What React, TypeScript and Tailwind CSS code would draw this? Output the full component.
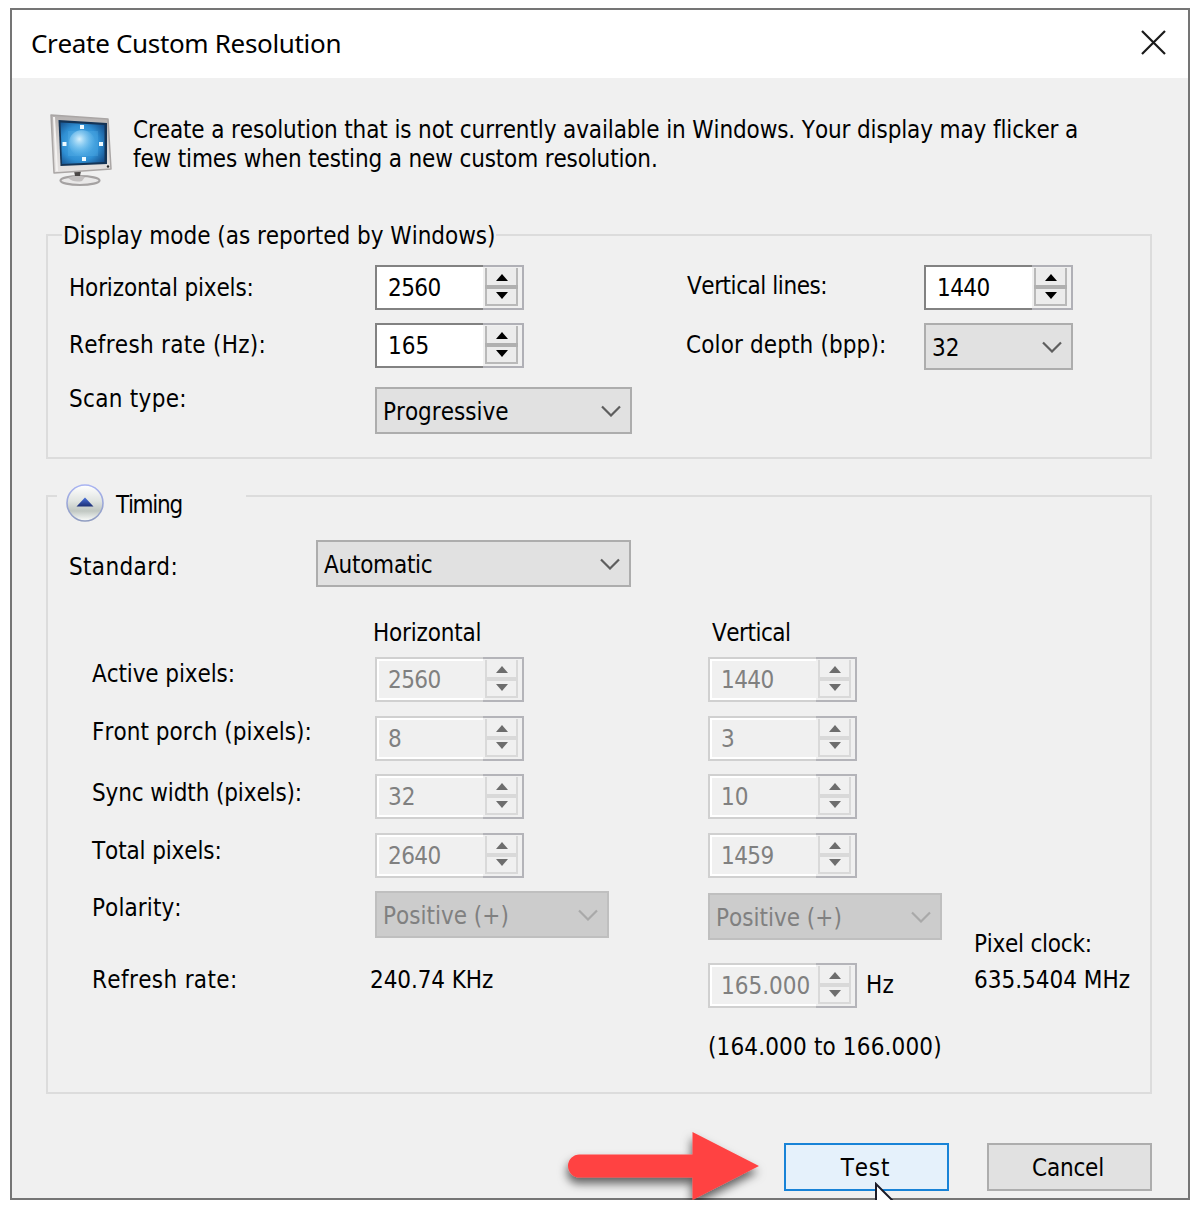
import React from 'react';
import clsx from 'clsx';

const TEXT = 'h-[30px] leading-[30px] whitespace-nowrap';

function App() {
  return (
    <div className="relative h-[1200px] w-[1204px] overflow-hidden bg-white pl-[10px] pt-[8px] font-['DejaVu_Sans_Condensed','DejaVu_Sans',sans-serif] text-[24px] text-black [font-kerning:none]">
      <div className="flex h-[1192px] w-[1180px] flex-col border-2 border-[#757575] bg-[#f0f0f0]">
        {/* Title bar */}
        <div className="flex h-[68px] shrink-0 items-center justify-between bg-white pl-[19px] pr-[22px]">
          <h1 className="-mt-[3px] whitespace-nowrap font-['Noto_Sans',sans-serif] text-[26px] leading-[34px] tracking-[-0.33px]">
            Create Custom Resolution
          </h1>
          <button aria-label="Close" className="-mt-[4px]">
            <svg width="25" height="25" viewBox="0 0 25 25" fill="none" stroke="#1a1a1a" strokeWidth="2.2">
              <path d="M1 1 24 24M24 1 1 24" />
            </svg>
          </button>
        </div>

        <div className="flex flex-1 flex-col pl-[34px] pr-[36px]">
          {/* Intro */}
          <div className="flex h-[156px] shrink-0 items-start">
            <MonitorIcon />
            <p className="ml-[17px] mt-[38px] whitespace-nowrap leading-[29px]">
              <span className="block tracking-[-0.12px]">
                Create a resolution that is not currently available in Windows. Your display may flicker a
              </span>
              <span className="block tracking-[-0.15px]">few times when testing a new custom resolution.</span>
            </p>
          </div>

          {/* Display mode */}
          <section className="h-[225px] shrink-0 border-2 border-[#dcdcdc]">
            <h2 className={clsx(TEXT, '-mt-[15px] ml-[14px] w-fit bg-[#f0f0f0] px-px tracking-[-0.02px]')}>
              Display mode (as reported by Windows)
            </h2>
            <div className="ml-[20px] mt-[14px] flex h-[58px] items-start">
              <span className={clsx(TEXT, 'mt-[8px] w-[307px] pl-px tracking-[-0.15px]')}>Horizontal pixels:</span>
              <Spinner value="2560" />
              <span className={clsx(TEXT, 'ml-[163px] mt-[6px] w-[237px] tracking-[-0.45px]')}>Vertical lines:</span>
              <Spinner value="1440" />
            </div>
            <div className="ml-[20px] flex h-[64px] items-start">
              <span className={clsx(TEXT, 'mt-[7px] w-[307px] pl-px tracking-[0.27px]')}>Refresh rate (Hz):</span>
              <Spinner value="165" />
              <span className={clsx(TEXT, 'ml-[162px] mt-[7px] w-[238px] tracking-[0.12px]')}>Color depth (bpp):</span>
              <Select value="32" className="w-[149px]" />
            </div>
            <div className="ml-[20px] flex items-start">
              <span className={clsx(TEXT, '-mt-[3px] w-[307px] pl-px tracking-[0.3px]')}>Scan type:</span>
              <Select value="Progressive" className="w-[257px]" />
            </div>
          </section>

          {/* Timing */}
          <section className="mt-[36px] h-[599px] shrink-0 border-2 border-[#dcdcdc]">
            <div className="-mt-[15px] ml-[9px] flex h-[42px] w-[189px] items-start bg-[#f0f0f0] pl-[8px]">
              <CollapseIcon />
              <h2 className={clsx(TEXT, 'ml-[11px] mt-[8px] tracking-[-1.3px]')}>Timing</h2>
            </div>
            <div className="ml-[20px] mt-[16px] flex h-[47px] items-start">
              <span className={clsx(TEXT, 'mt-[12px] w-[248px] pl-px tracking-[0.35px]')}>Standard:</span>
              <Select value="Automatic" className="w-[315px] tracking-[-0.25px]" />
            </div>

            <div className="ml-[43px] flex items-start">
              <div className="flex w-[284px] flex-col pl-px pt-[72px]">
                <span className={clsx(TEXT, 'tracking-[-0.1px]')}>Active pixels:</span>
                <span className={clsx(TEXT, 'mt-[28px] tracking-[0.05px]')}>Front porch (pixels):</span>
                <span className={clsx(TEXT, 'mt-[31px] tracking-[-0.12px]')}>Sync width (pixels):</span>
                <span className={clsx(TEXT, 'mt-[28px] tracking-[-0.13px]')}>Total pixels:</span>
                <span className={clsx(TEXT, 'mt-[27px] tracking-[0.1px]')}>Polarity:</span>
                <span className={clsx(TEXT, 'mt-[42px] tracking-[0.35px]')}>Refresh rate:</span>
              </div>

              <div className="flex w-[333px] flex-col items-start pt-[31px]">
                <span className={clsx(TEXT, '-ml-[2px] mb-[9px] tracking-[-0.2px]')}>Horizontal</span>
                <div className="flex flex-col gap-[13.5px]">
                  <Spinner value="2560" disabled />
                  <Spinner value="8" disabled />
                  <Spinner value="32" disabled />
                  <Spinner value="2640" disabled />
                </div>
                <Select value="Positive (+)" disabled className="mt-[13.5px] w-[234px]" />
                <span className={clsx(TEXT, '-ml-[5px] mt-[27px] tracking-[-0.1px]')}>240.74 KHz</span>
              </div>

              <div className="flex w-[265px] flex-col items-start pt-[31px]">
                <span className={clsx(TEXT, 'mb-[9px] ml-[4px] tracking-[-0.5px]')}>Vertical</span>
                <div className="flex flex-col gap-[13.5px]">
                  <Spinner value="1440" disabled />
                  <Spinner value="3" disabled />
                  <Spinner value="10" disabled />
                  <Spinner value="1459" disabled />
                </div>
                <Select value="Positive (+)" disabled className="mt-[15.5px] w-[234px]" />
                <div className="mt-[23px] flex items-start">
                  <Spinner value="165.000" disabled />
                  <span className={clsx(TEXT, 'ml-[9px] mt-[7px] tracking-[0.3px]')}>Hz</span>
                </div>
                <span className={clsx(TEXT, 'mt-[24px] tracking-[0.15px]')}>(164.000 to 166.000)</span>
              </div>

              <div className="flex flex-col pl-px pt-[342px]">
                <span className={clsx(TEXT, 'tracking-[-0.25px]')}>Pixel clock:</span>
                <span className={clsx(TEXT, 'mt-[6px]')}>635.5404 MHz</span>
              </div>
            </div>
          </section>

          {/* Actions */}
          <div className="mt-[49px] flex justify-end gap-[38px]">
            <button className="h-[48px] w-[165px] border-2 border-[#1883d7] bg-[#e5f1fb] pr-[2px] pt-[2px] tracking-[0.8px]">
              Test
            </button>
            <button className="h-[48px] w-[165px] border-2 border-[#adadad] bg-[#e1e1e1] pr-[3px] pt-[2px] tracking-[-0.2px]">
              Cancel
            </button>
          </div>
        </div>
      </div>

      {/* Arrow pointing at the Test button */}
      <svg className="absolute left-[548px] top-[1120px]" width="230" height="80" viewBox="0 0 230 80">
        <defs>
          <filter id="arrow-shadow" x="-10%" y="-20%" width="120%" height="160%">
            <feDropShadow dx="-1" dy="6" stdDeviation="5" floodColor="#000" floodOpacity="0.6" />
          </filter>
        </defs>
        <path
          d="M31.5 34.5H144.5V12L211 46 144.5 80V57.5H31.5A11.5 11.5 0 0 1 31.5 34.5Z"
          fill="#ff4343"
          filter="url(#arrow-shadow)"
        />
      </svg>

      {/* Mouse pointer */}
      <svg className="absolute left-[874px] top-[1182px]" width="32" height="40" viewBox="0 0 32 40">
        <path d="M2 2V30L8 24 13 34 17 32 13 22H22Z" fill="#fff" stroke="#1c1c28" strokeWidth="2" />
      </svg>
    </div>
  );
}

function Spinner({ value, disabled }: { value: string; disabled?: boolean }) {
  const button = clsx(
    'flex h-[17px] w-[33px] items-center justify-center border-x-2',
    disabled ? 'border-[#d9d9d9]' : 'border-[#b9b9b9] bg-[#ececec]',
  );
  const fill = disabled ? '#6d6d6d' : '#000000';
  return (
    <div className="flex h-[45px] w-[149px] shrink-0">
      <div
        className={clsx(
          'w-[108px] border-y-2 border-l-2',
          disabled ? 'border-[#d0d0d0] text-[#808080]' : 'border-[#828282] bg-white',
        )}
      >
        <div className="h-[41px] border-y-2 border-l-2 border-white pl-[9px] pt-[4px]">
          <span className={clsx(TEXT, 'block', value.length === 4 && 'tracking-[-0.6px]')}>{value}</span>
        </div>
      </div>
      <div
        className={clsx(
          'flex w-[41px] flex-col border-y-2 border-r-2 pl-[2px] pt-px',
          disabled ? 'border-[#b4b4b9]' : 'border-[#b0b0b6]',
        )}
      >
        <div className={button}>
          <svg width="12" height="7" viewBox="0 0 12 7" className="mt-[2px]">
            <path d="M6 0 12 7H0Z" fill={fill} />
          </svg>
        </div>
        <div className={clsx('h-[4px] w-[33px]', disabled ? 'bg-[#d9d9d9]' : 'bg-[#b0b0b0]')} />
        <div className={clsx(button, 'border-b-2')}>
          <svg width="12" height="7" viewBox="0 0 12 7" className="-mt-[3px]">
            <path d="M0 0H12L6 7Z" fill={fill} />
          </svg>
        </div>
      </div>
    </div>
  );
}

function Select({ value, disabled, className }: { value: string; disabled?: boolean; className?: string }) {
  return (
    <div
      className={clsx(
        'flex h-[47px] shrink-0 items-center justify-between border-2 pl-[6px] pr-[9px]',
        disabled ? 'border-[#bfbfbf] bg-[#cccccc] text-[#808080]' : 'border-[#adadad] bg-[#e1e1e1]',
        className,
      )}
    >
      <span className={clsx(TEXT, 'mt-[3px]')}>{value}</span>
      <svg
        width="20"
        height="12"
        viewBox="0 0 20 12"
        fill="none"
        stroke={disabled ? '#a9a9a9' : '#5e5e5e'}
        strokeWidth="2.2"
      >
        <path d="M1 1.5 10 10.5 19 1.5" />
      </svg>
    </div>
  );
}

function CollapseIcon() {
  return (
    <svg width="40" height="40" viewBox="0 0 40 40" className="mt-px shrink-0">
      <defs>
        <linearGradient id="knob" x1="0" y1="0" x2="0" y2="1">
          <stop offset="0" stopColor="#ffffff" />
          <stop offset="0.45" stopColor="#e0e4e1" />
          <stop offset="0.72" stopColor="#c0c7c2" />
          <stop offset="1" stopColor="#fbfdfb" />
        </linearGradient>
        <linearGradient id="knob-ring" x1="0" y1="0" x2="0" y2="1">
          <stop offset="0" stopColor="#a9b4f2" />
          <stop offset="1" stopColor="#8f9cc0" />
        </linearGradient>
        <linearGradient id="knob-arrow" x1="0" y1="0" x2="0" y2="1">
          <stop offset="0" stopColor="#4a72dc" />
          <stop offset="1" stopColor="#1c2f74" />
        </linearGradient>
      </defs>
      <circle cx="20" cy="20" r="18" fill="url(#knob)" stroke="url(#knob-ring)" strokeWidth="1.6" />
      <path d="M20 14.500 28.500 23.500H11.500Z" fill="url(#knob-arrow)" />
    </svg>
  );
}

function MonitorIcon() {
  return (
    <svg width="68" height="78" viewBox="0 0 68 78" className="ml-[2px] mt-[33px] shrink-0">
      <defs>
        <radialGradient id="screen" cx="0.45" cy="0.5" r="0.7">
          <stop offset="0" stopColor="#5cb8ec" />
          <stop offset="0.6" stopColor="#2f8fd3" />
          <stop offset="1" stopColor="#134a86" />
        </radialGradient>
        <radialGradient id="orb" cx="0.4" cy="0.35" r="0.65">
          <stop offset="0" stopColor="#d8f1fd" />
          <stop offset="1" stopColor="#5fb8ee" stopOpacity="0" />
        </radialGradient>
        <linearGradient id="frame" x1="0" y1="0" x2="0" y2="1">
          <stop offset="0" stopColor="#b5b1b0" />
          <stop offset="0.5" stopColor="#d6d3d2" />
          <stop offset="1" stopColor="#e6e3e2" />
        </linearGradient>
      </defs>
      <ellipse cx="32" cy="69.500" rx="19.500" ry="4.500" fill="#e9e8e8" stroke="#a5a2a2" strokeWidth="2.2" />
      <path d="M20 67Q28 63 37 66L34 70Q26 72 20 67Z" fill="#c2bfbf" />
      <path d="M26 60H33L32 65H27Z" fill="#4b4746" />
      <path d="M3 4 60 8 63 58 6 62Z" fill="url(#frame)" stroke="#aaa6a5" strokeWidth="1.5" strokeLinejoin="round" />
      <path d="M6 6 9 60" stroke="#f4f2f1" strokeWidth="2" />
      <path d="M10.500 9 59 12 59 53 12.500 55Z" fill="#143456" />
      <path d="M12.500 11.500 56.500 14 56.500 51 14 53Z" fill="url(#screen)" />
      <path d="M20 20H50V45H20Z" fill="#62bbee" opacity="0.250" />
      <circle cx="34" cy="32" r="13" fill="url(#orb)" />
      <path d="M32 14h4v4h-4zM14.500 31h4v4h-4zM51 31h4v4h-4zM34 46h4v4h-4z" fill="#eefaff" />
      <circle cx="60" cy="55.500" r="1.2" fill="#2a2a2a" />
    </svg>
  );
}

export default App;
